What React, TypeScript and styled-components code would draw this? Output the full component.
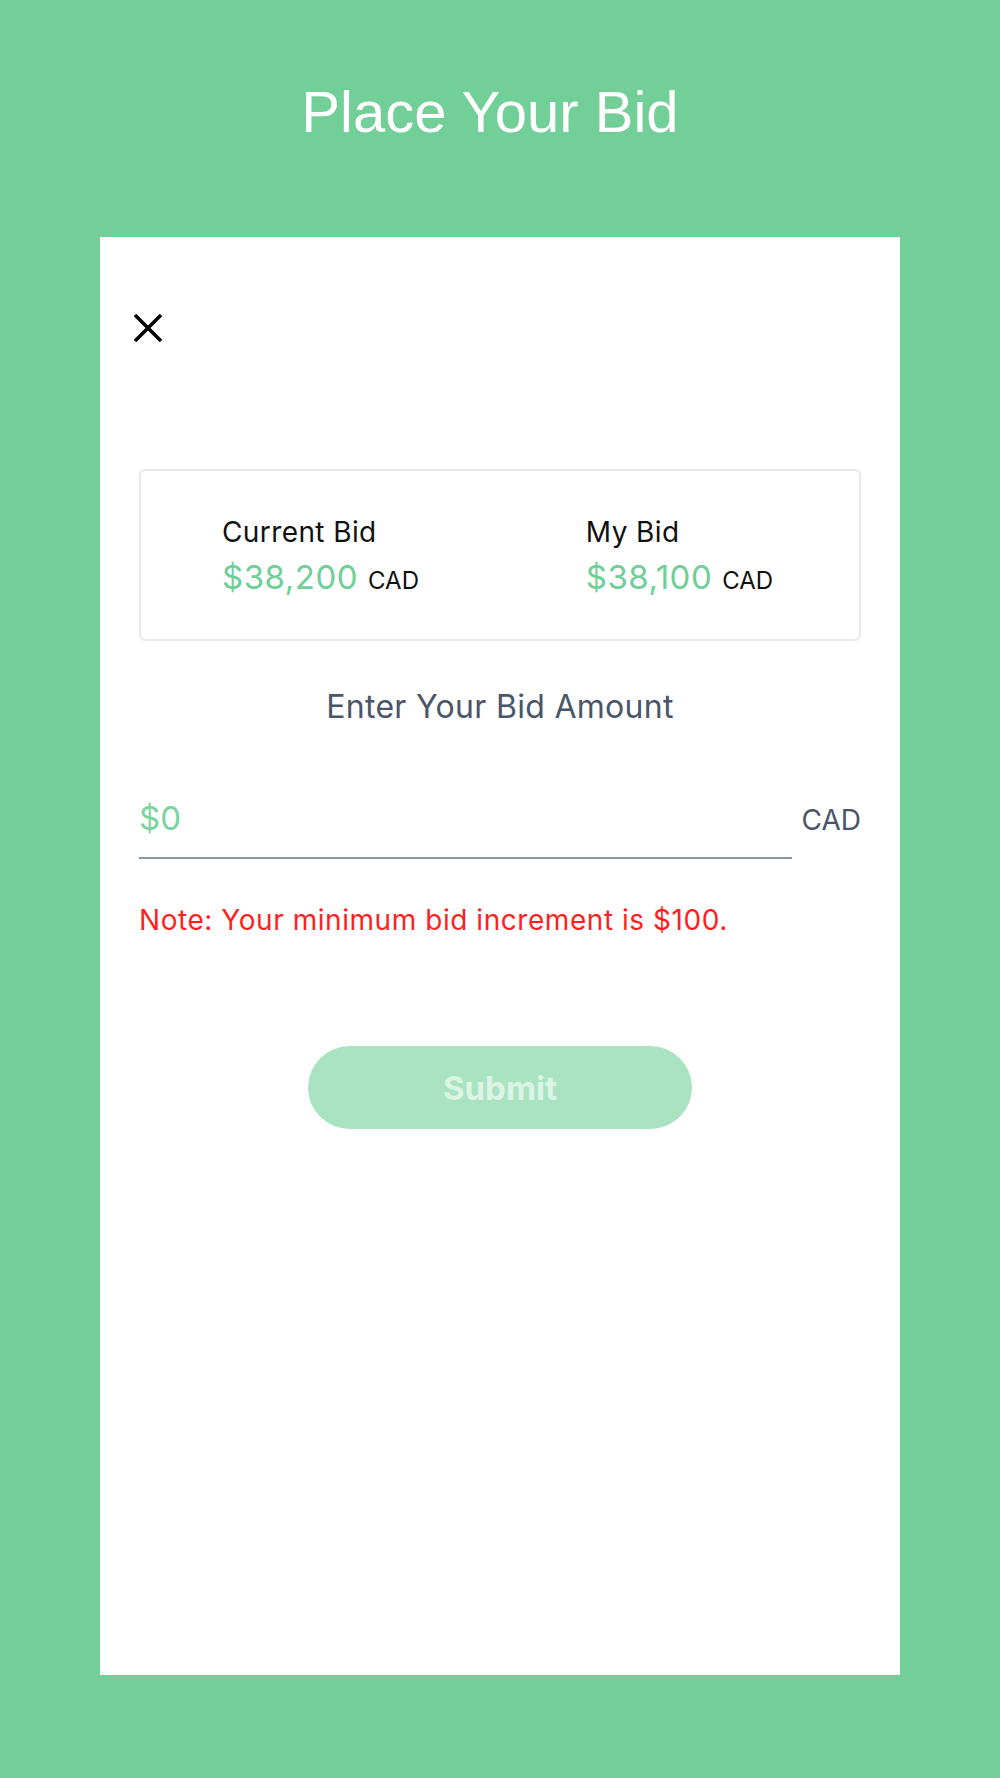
import React from "react";
import styled, { createGlobalStyle } from "styled-components";

const GlobalStyle = createGlobalStyle`
  html, body {
    margin: 0;
    padding: 0;
    background-color: #71cf97;
  }
  * {
    box-sizing: border-box;
  }
`;

const Page = styled.div`
  min-height: 1778px;
  display: flex;
  flex-direction: column;
  align-items: center;
  padding-top: 83px;
`;

const Title = styled.h1`
  margin: 0;
  padding-right: 20px;
  font-family: "Liberation Sans", Arial, sans-serif;
  font-weight: 400;
  font-size: 58px;
  line-height: 58px;
  color: #ffffff;
`;

const Card = styled.div`
  margin-top: 96px;
  width: 800px;
  height: 1438px;
  background-color: #ffffff;
  padding: 76px 39px 0 33px;
  display: flex;
  flex-direction: column;
  font-family: Inter, "Noto Sans", sans-serif;
`;

const CloseButton = styled.button`
  align-self: flex-start;
  width: 30px;
  height: 30px;
  padding: 0;
  border: none;
  background: none;
  cursor: pointer;
  display: flex;
`;

const Body = styled.div`
  margin-top: 126px;
  padding-left: 6px;
  display: flex;
  flex-direction: column;
`;

const BidBox = styled.div`
  height: 172px;
  padding-top: 6px;
  border: 2px solid #e8e8e8;
  border-radius: 6px;
  display: flex;
  align-items: center;
`;

const BidColumn = styled.div`
  flex: 1;
  display: flex;
  justify-content: center;
`;

const BidLabel = styled.div`
  font-size: 28px;
  line-height: 34px;
  letter-spacing: 0.4px;
  color: #111111;
`;

const AmountRow = styled.div`
  margin-top: 8px;
  display: flex;
  align-items: baseline;
  line-height: 40px;
`;

const Amount = styled.span`
  font-size: 33px;
  letter-spacing: 0.5px;
  color: #6fcf97;
`;

const Currency = styled.span`
  margin-left: 10px;
  font-size: 24px;
  color: #111111;
`;

const Prompt = styled.div`
  margin-top: 47px;
  text-align: center;
  font-size: 32px;
  line-height: 38px;
  letter-spacing: 0.3px;
  color: #4a5568;
`;

const InputRow = styled.div`
  margin-top: 53px;
  display: flex;
  align-items: flex-end;
`;

const AmountInput = styled.input`
  flex: 1;
  min-width: 0;
  height: 80px;
  padding: 0;
  border: none;
  border-bottom: 2px solid #8795a1;
  outline: none;
  background: transparent;
  font-family: Inter, "Noto Sans", sans-serif;
  font-size: 33px;
  color: #6fcf97;

  &::placeholder {
    color: #7bd3a0;
  }
`;

const InputCurrency = styled.span`
  margin-left: 10px;
  margin-bottom: 22px;
  font-size: 28px;
  line-height: 34px;
  color: #4a5568;
`;

const Note = styled.p`
  margin: 44px 0 0;
  font-size: 28px;
  line-height: 34px;
  letter-spacing: 0.55px;
  color: #ff1f1f;
`;

const SubmitButton = styled.button`
  align-self: center;
  margin-top: 109px;
  width: 384px;
  height: 83px;
  border: none;
  border-radius: 42px;
  background-color: #aae3c2;
  color: #dcf4e6;
  font-family: Inter, "Noto Sans", sans-serif;
  font-weight: 700;
  font-size: 33px;
  cursor: not-allowed;
`;

interface IBidProps {
  label: string;
  amount: string;
}

function BidInfo({ label, amount }: IBidProps) {
  return (
    <BidColumn>
      <div>
        <BidLabel>{label}</BidLabel>
        <AmountRow>
          <Amount>{amount}</Amount>
          <Currency>CAD</Currency>
        </AmountRow>
      </div>
    </BidColumn>
  );
}

function App() {
  return (
    <>
      <GlobalStyle />
      <Page>
        <Title>Place Your Bid</Title>
        <Card>
          <CloseButton aria-label="Close">
            <svg width="30" height="30" viewBox="0 0 30 30">
              <path d="M2 2 L28 28 M28 2 L2 28" stroke="#000" strokeWidth="3.6" />
            </svg>
          </CloseButton>
          <Body>
            <BidBox>
              <BidInfo label="Current Bid" amount="$38,200" />
              <BidInfo label="My Bid" amount="$38,100" />
            </BidBox>
            <Prompt>Enter Your Bid Amount</Prompt>
            <InputRow>
              <AmountInput type="text" placeholder="$0" />
              <InputCurrency>CAD</InputCurrency>
            </InputRow>
            <Note>Note: Your minimum bid increment is $100.</Note>
            <SubmitButton disabled>Submit</SubmitButton>
          </Body>
        </Card>
      </Page>
    </>
  );
}

export default App;
